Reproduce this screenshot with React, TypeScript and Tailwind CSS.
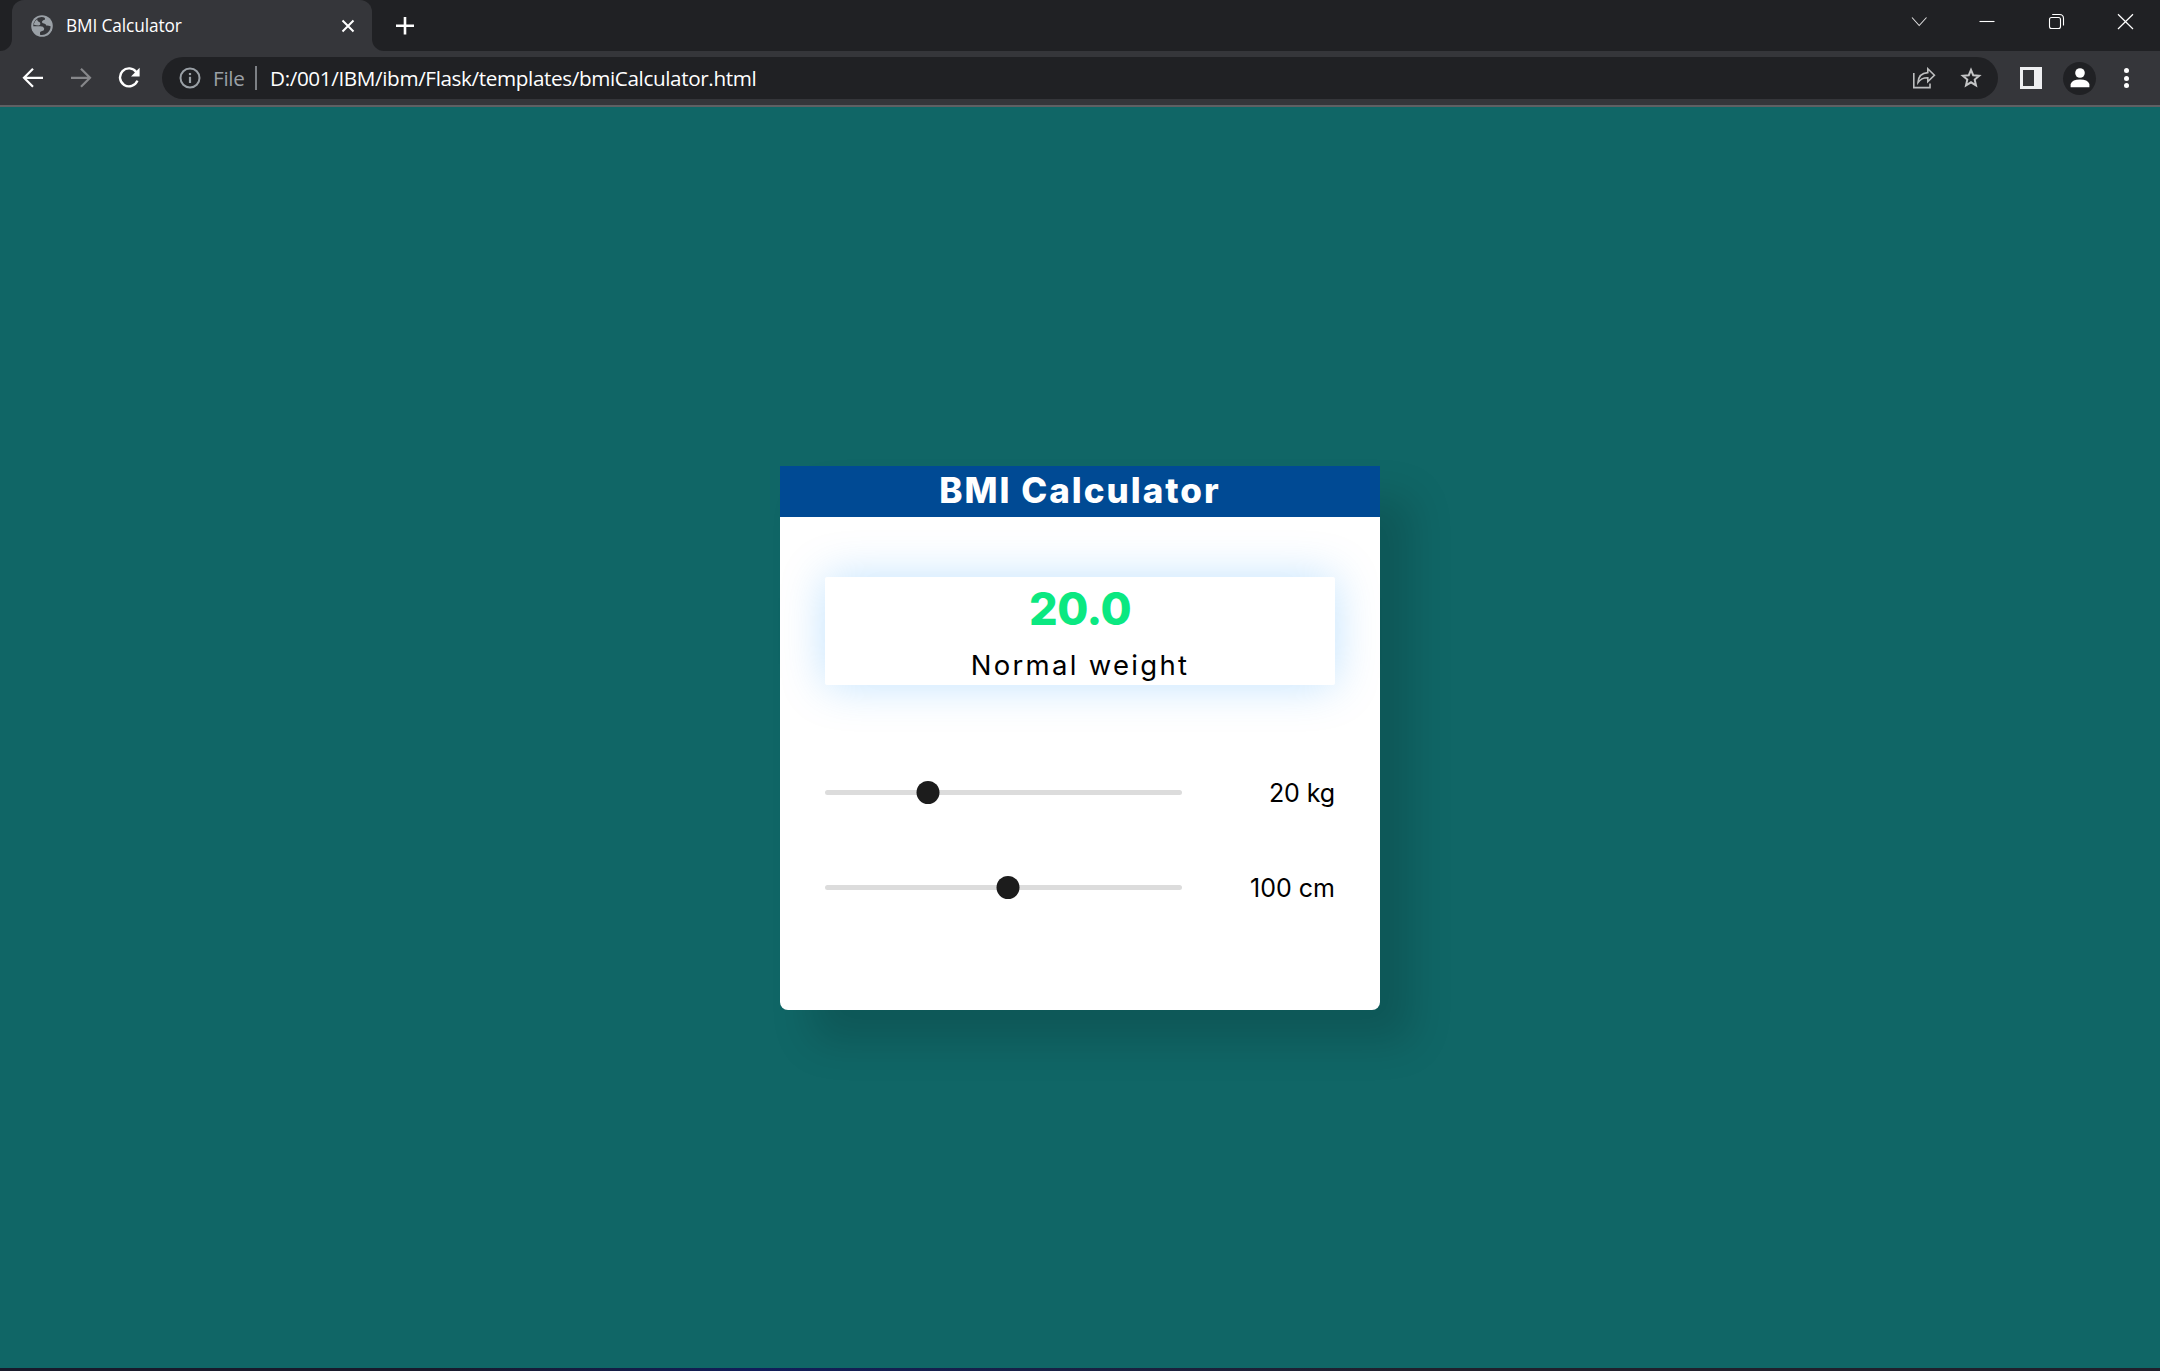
import type { ReactNode } from "react";

function TabStrip() {
  return (
    <div className="flex h-[51px] bg-[#202124]">
      <div className="flex w-3 items-end bg-[#35363a]">
        <div className="h-[51px] w-3 rounded-br-[12px] bg-[#202124]" />
      </div>
      <div className="flex w-[360px] bg-[#202124]">
        <div className="flex w-full items-center rounded-t-[12px] bg-[#35363a] pl-[19px] pr-[17px]">
          <svg className="mt-px size-[22px] shrink-0" viewBox="0 0 22 22">
            <circle cx="11" cy="11" r="10.8" fill="#9aa0a6" />
            <path
              d="M10.5 2 Q15 2.2 13.8 4.8 Q12 5 11 6.4 Q10.6 8.2 13 8.4 Q15.2 8.6 15.2 10.6 Q17.5 10.4 19.6 11.2 A8.8 8.8 0 0 1 9 19.7 V17.5 Q9.4 16 11.2 16 Q13.5 15.4 13.2 13.4 Q12.6 11.2 9.4 11.2 H2.2 A8.8 8.8 0 0 1 10.5 2 Z"
              fill="#35363a"
            />
            <path d="M2.6 9.4 Q3.4 5.8 6.2 4.2 Q6.2 6 7.6 6.8 Q9.4 7.2 9.4 9 Q9.4 10.4 7.6 10.4 Q5 10.2 2.6 9.4 Z" fill="#9aa0a6" />
          </svg>
          <span className="ml-[13px] whitespace-nowrap font-['Open_Sans',sans-serif] text-[17.3px] leading-6 tracking-[-0.12px] text-white">
            BMI Calculator
          </span>
          <svg className="ml-auto size-[14px]" viewBox="0 0 14 14">
            <path d="M1.5 1.5 L12.5 12.5 M12.5 1.5 L1.5 12.5" stroke="#fff" strokeWidth="2" />
          </svg>
        </div>
      </div>
      <div className="flex flex-1 bg-[#35363a]">
        <div className="flex flex-1 rounded-bl-[12px] bg-[#202124]">
          <svg className="ml-6 mt-[17px] size-[18px]" viewBox="0 0 18 18">
            <path d="M9 0 V17.5 M0 8.7 H18" stroke="#fff" strokeWidth="2.6" />
          </svg>
          <div className="ml-auto flex pr-[26px] pt-[13px]">
            <svg className="mr-[51px] h-[17px] w-[17px]" viewBox="0 0 17 17">
              <path d="M1 4.5 L8.2 12.5 L15.5 4.5" stroke="#dedede" strokeWidth="1.1" fill="none" />
            </svg>
            <svg className="mr-[53px] h-[17px] w-4" viewBox="0 0 16 17">
              <path d="M0.5 8.5 H15.5" stroke="#fff" strokeWidth="1.1" />
            </svg>
            <svg className="mr-[52px] h-[17px] w-[17px]" viewBox="0 0 17 17">
              <rect x="1.5" y="4.5" width="11" height="11" rx="2" stroke="#fff" fill="none" strokeWidth="1.1" />
              <path d="M4.2 1.5 H11.5 Q15.5 1.5 15.5 5.5 V12.5" stroke="#fff" fill="none" strokeWidth="1.1" />
            </svg>
            <svg className="h-[17px] w-[17px]" viewBox="0 0 17 17">
              <path d="M1 1.2 L16 16 M16 1.2 L1 16" stroke="#fff" strokeWidth="1.2" />
            </svg>
          </div>
        </div>
      </div>
    </div>
  );
}

function Toolbar() {
  return (
    <div className="flex h-[56px] items-center border-b-2 border-[#5f6063] bg-[#35363a] pl-[22px]">
      <svg className="size-[22px]" viewBox="0 0 22 22">
        <path d="M21 10.8 H2.5 M11 1.8 L2 10.8 L11 19.8" stroke="#fff" strokeWidth="2.2" fill="none" />
      </svg>
      <svg className="ml-[26px] size-[22px]" viewBox="0 0 22 22">
        <path d="M1 10.8 H19.5 M11 1.8 L20 10.8 L11 19.8" stroke="#86878a" strokeWidth="2.2" fill="none" />
      </svg>
      <svg className="ml-[26px] size-[22px]" viewBox="0 0 22 22">
        <path d="M18.4 5.2 A9 9 0 1 0 19.4 13.6" stroke="#fff" strokeWidth="2.4" fill="none" />
        <path d="M21.6 0.8 V9.4 H13 Z" fill="#fff" />
      </svg>
      <div className="ml-[22px] flex h-[42px] w-[1836px] items-center rounded-full bg-[#202124] pl-[17px] pr-4 font-['Open_Sans',sans-serif] text-[20.7px] leading-[30px]">
        <svg className="size-[22px]" viewBox="0 0 22 22">
          <circle cx="11" cy="11" r="9.5" stroke="#9aa0a6" strokeWidth="2" fill="none" />
          <path d="M11 9.8 V16" stroke="#9aa0a6" strokeWidth="2.2" />
          <path d="M11 6 V8.1" stroke="#9aa0a6" strokeWidth="2.2" />
        </svg>
        <span className="ml-3 w-[42px] whitespace-nowrap tracking-[-0.3px] text-[#9aa0a6]">File</span>
        <div className="h-6 w-[2px] bg-[#7d8085]" />
        <span className="ml-[13px] whitespace-nowrap tracking-[-0.38px] text-white">
          D:/001/IBM/ibm/Flask/templates/bmiCalculator.html
        </span>
        <svg className="ml-auto h-[22px] w-6" viewBox="0 0 24 22">
          <path d="M1.8 6 V20.6 H18 V16.6" stroke="#bdbebf" strokeWidth="1.6" fill="none" />
          <path
            d="M6 15.6 Q6.4 6.2 15.8 5.6 V1.8 L22.4 8.3 L15.8 14.6 V10.8 Q9.5 10.6 6 15.6 Z"
            stroke="#bdbebf"
            strokeWidth="1.6"
            fill="none"
          />
        </svg>
        <svg className="ml-6 size-[22px]" viewBox="0 0 22 22">
          <path
            d="M11 2.8 L13.2 8.2 L19.2 8.7 L14.7 12.6 L16 18.4 L11 15.3 L6 18.4 L7.3 12.6 L2.8 8.7 L8.8 8.2 Z"
            stroke="#c4c5c6"
            strokeWidth="2"
            fill="none"
          />
        </svg>
      </div>
      <div className="ml-[22px] flex h-[22px] w-[22px] border-[3px] border-[#eeeff1] bg-[#35363a]">
        <div className="ml-auto w-[5px] bg-[#eeeff1]" />
      </div>
      <div className="ml-[21px] flex size-[33px] items-center justify-center rounded-full bg-[#202124]">
        <svg className="size-5" viewBox="0 0 20 20">
          <circle cx="10" cy="5" r="4.8" fill="#fff" />
          <path d="M0.6 19.2 V16 Q2.4 11.6 10 11.6 Q17.6 11.6 19.4 16 V19.2 Z" fill="#fff" />
        </svg>
      </div>
      <div className="ml-7 flex flex-col gap-[2.6px]">
        <div className="size-[5px] rounded-full bg-white" />
        <div className="size-[5px] rounded-full bg-white" />
        <div className="size-[5px] rounded-full bg-white" />
      </div>
    </div>
  );
}

function SliderRow({ percent, children }: { percent: number; children: ReactNode }) {
  return (
    <div className="flex h-[37px] items-center justify-between">
      <div className="relative h-[5px] w-[357px] rounded-full bg-[#dcdcdc]">
        <div
          className="absolute -top-[9px] size-[23px] -translate-x-1/2 rounded-full bg-[#1c1c1c]"
          style={{ left: `${percent}%` }}
        />
      </div>
      {children}
    </div>
  );
}

export default function App() {
  return (
    <div className="flex h-[1371px] w-[2160px] flex-col overflow-hidden">
      <TabStrip />
      <Toolbar />
      <main className="flex flex-1 items-center justify-center bg-[#106666] pt-px font-['Inter',sans-serif]">
        <section className="h-[544px] w-[600px] rounded-b-[8px] bg-white shadow-[32px_32px_41px_rgba(0,0,0,0.15)]">
          <h1 className="h-[51px] bg-[#004a94] text-center text-[35px] font-extrabold leading-[49px] tracking-[2px] text-white">
            BMI Calculator
          </h1>
          <div className="px-[45px] pt-[60px]">
            <div className="h-[108px] rounded-[2px] text-center shadow-[0_0_45px_rgba(0,139,253,0.25)]">
              <div className="pt-1 text-[45px] font-extrabold leading-[56px] tracking-[-0.5px] text-[#0be881]">20.0</div>
              <div className="pt-[10px] text-[27.5px] leading-[36px] tracking-[2.3px] text-black">Normal weight</div>
            </div>
            <div className="mt-[89px] flex flex-col gap-[58px] text-[25px] leading-[36px] text-black">
              <SliderRow percent={28.8}>
                <span className="tracking-[-0.1px]">20 kg</span>
              </SliderRow>
              <SliderRow percent={51.3}>
                <span>100 cm</span>
              </SliderRow>
            </div>
          </div>
        </section>
      </main>
      <div className="h-[3px] bg-linear-to-r from-[#181a2b] from-20% via-[#111d5a] via-35% to-[#20202c] to-65%" />
    </div>
  );
}
